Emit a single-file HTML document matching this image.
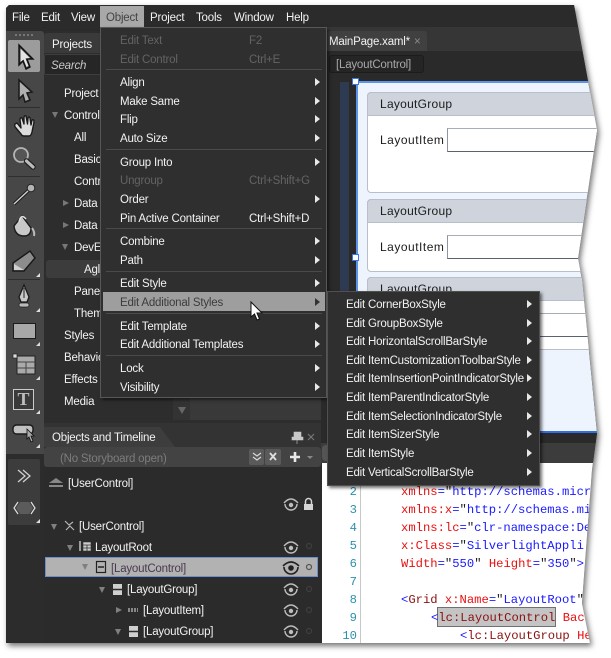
<!DOCTYPE html>
<html><head><meta charset="utf-8">
<style>
html,body{margin:0;padding:0;background:#fff;width:611px;height:658px;overflow:hidden}
#sh{position:absolute;left:0;top:0;width:611px;height:658px;filter:drop-shadow(2px 3px 3px rgba(0,0,0,.55))}
#w{position:absolute;left:0;top:0;width:611px;height:658px;background:#2f2f2f;clip-path:polygon(9px 5px,574px 5px,597px 130px,578px 258px,582px 280px,597px 433px,592px 470px,582px 603px,590px 643px,6px 643px,6px 8px);overflow:hidden}
.a{position:absolute}
.t{position:absolute;white-space:nowrap;line-height:14px;height:14px;margin-top:1px;color:#f2f2f2;font:11.5px/14px "Liberation Sans",sans-serif;letter-spacing:-.2px}
.d{color:#636363}
.h{color:#1c1c1c;font-size:12px;letter-spacing:.27px;margin-top:0}
.i{color:#1c1c1c;font-size:12px;letter-spacing:.5px;margin-top:0}
.r{position:absolute;width:0;height:0;border-left:5px solid #e8e8e8;border-top:4px solid transparent;border-bottom:4px solid transparent}
.s{position:absolute;left:106px;width:216px;height:1px;background:#4a4a4a}
.ct{position:absolute;white-space:pre;font:12.2px/16px "Liberation Mono",monospace;height:16px}
.n{position:absolute;right:254px;font:12.2px/16px "Liberation Mono",monospace;color:#2b91af}
.x{color:#e81010}.b{color:#1a1aff}.m{color:#8b1010}.k{color:#222}
svg{position:absolute;overflow:visible}
</style></head><body>
<div id="sh"><div id="w">

<!-- menu bar -->
<div class="a" style="left:6px;top:5px;width:600px;height:26px;background:#2b2b2b"></div>
<div class="a" style="left:100px;top:6px;width:44px;height:21px;background:#a8a8a8"></div>
<div class="t" style="left:12px;top:10px">File</div>
<div class="t" style="left:41px;top:10px">Edit</div>
<div class="t" style="left:71px;top:10px">View</div>
<div class="t" style="left:106px;top:10px;color:#444">Object</div>
<div class="t" style="left:150px;top:10px">Project</div>
<div class="t" style="left:196px;top:10px">Tools</div>
<div class="t" style="left:234px;top:10px">Window</div>
<div class="t" style="left:286px;top:10px">Help</div>

<!-- left toolbar -->
<div class="a" style="left:6px;top:31px;width:38px;height:612px;background:#2c2c2c"></div>
<div class="a" style="left:6px;top:31px;width:38px;height:423px;background:#474747;border-radius:0 3px 0 0"></div>
<div class="a" style="left:8px;top:459px;width:32px;height:66px;background:#3c3c3c;border-radius:2px"></div>
<div class="a" style="left:15px;top:34px;width:18px;height:2px;background:repeating-linear-gradient(90deg,#777 0 2px,transparent 2px 4px)"></div>
<div class="a" style="left:8px;top:40px;width:32px;height:32px;background:#9c9c9c;border-radius:2px"></div>
<div class="a" style="left:8px;top:107px;width:32px;height:1px;background:#2e2e2e"></div>
<div class="a" style="left:8px;top:176px;width:32px;height:1px;background:#2e2e2e"></div>
<div class="a" style="left:8px;top:279px;width:32px;height:1px;background:#2e2e2e"></div>

<svg width="611" height="658" style="left:0;top:0">
<!-- selection arrow active -->
<path d="M19 45 L33 59 L27 59 L30 67 L26 69 L23 61 L19 65 Z" fill="#3a3a3a" stroke="#111" stroke-width="1.4"/>
<path d="M20.5 48.5 L30 58 L25.5 58.5 L28.5 66 L26.5 67 L23.5 59.5 L20.5 62 Z" fill="#e4e4e4"/>
<!-- direct select arrow -->
<path d="M19 80 L32 92 L27 93 L30 100 L25 102 L23 95 L19 99 Z" fill="#b0b0b0" stroke="#1c1c1c" stroke-width="1.6"/>
<!-- hand -->
<path d="M15 124 Q14 126 16 128 L21 134 Q22 136 24 136 H29 Q31 136 32 132 L34 122 Q34 119 32 120 L31 125 L30 118 Q29 116 28 118 L27.500 124 L26 116 Q25 115 24 117 L24 124 L22 118 Q20 117 20 120 L21 128 L17 123 Z" fill="#dcdcdc" stroke="#1a1a1a" stroke-width="1.400" stroke-linejoin="round"/>
<!-- zoom -->
<circle cx="21" cy="155" r="7" fill="#555" stroke="#b4b4b4" stroke-width="1.800"/>
<path d="M26.500 161 L33 167" stroke="#1c1c1c" stroke-width="5.400" stroke-linecap="round"/>
<path d="M26.500 161 L33 167" stroke="#bcbcbc" stroke-width="3.200" stroke-linecap="round"/>
<!-- eyedropper -->
<path d="M14 204 L29 190" stroke="#1c1c1c" stroke-width="3.400"/>
<path d="M14 204 L29 190" stroke="#d0d0d0" stroke-width="1.400"/>
<circle cx="31" cy="188" r="3.800" fill="#b4b4b4" stroke="#222"/>
<!-- bucket -->
<path d="M14 226 Q15 236 24 236 Q31 236 31 228 L22 216 Z" fill="#c8c8c8" stroke="#1c1c1c" stroke-width="1.400"/>
<path d="M19 222 Q21 213 26 219" fill="none" stroke="#ddd" stroke-width="1.500"/>
<path d="M32 228 Q35 232 34 236" fill="none" stroke="#bbb" stroke-width="2"/>
<!-- eraser -->
<path d="M13 263 L30 251 L35 258 L24 271 L13 271 Z" fill="#8c8c8c" stroke="#1a1a1a" stroke-width="1.500"/>
<path d="M14 264 L24 270 L14 270 Z" fill="#d0d0d0"/>
<path d="M36 277 L40 277 L40 273 Z" fill="#ddd"/>
<!-- pen -->
<path d="M24 285 L29 297 L27 302 L21 302 L19 297 Z" fill="#c9c9c9" stroke="#1a1a1a" stroke-width="1.300"/>
<path d="M24 288 L24 298" stroke="#222"/>
<rect x="19" y="303" width="10" height="4" rx="2" fill="#bbb" stroke="#222" stroke-width=".8"/>
<path d="M36 312 L40 312 L40 308 Z" fill="#ddd"/>
<!-- rect -->
<rect x="13.500" y="323.500" width="22" height="15" fill="#a8a8a8" stroke="#1c1c1c"/>
<path d="M36 346 L40 346 L40 342 Z" fill="#ddd"/>
<!-- grid -->
<rect x="17" y="356" width="18" height="18" fill="#aaa" stroke="#222"/>
<path d="M17 362 H35 M26 362 V374 M17 368 H35" stroke="#444" stroke-width="1"/>
<rect x="13" y="354" width="4" height="4" fill="#ddd" stroke="#222" stroke-width=".7"/>
<path d="M36 380 L40 380 L40 376 Z" fill="#ddd"/>
<!-- text -->
<rect x="13.500" y="389.500" width="20" height="20" fill="#3a3a3a" stroke="#ccc"/>
<text x="23.500" y="405" text-anchor="middle" font-family="Liberation Serif,serif" font-weight="bold" font-size="18" fill="#bdbdbd">T</text>
<path d="M36 414 L40 414 L40 410 Z" fill="#ddd"/>
<!-- callout -->
<rect x="13" y="425" width="20" height="9" rx="3.500" fill="#c0c0c0" stroke="#1a1a1a" stroke-width="1.400"/>
<path d="M27 429 L34 436 L31 436 L33 441 L31 442 L29 437 L27 439 Z" fill="#aaa" stroke="#111" stroke-width=".8"/>
<path d="M36 448 L40 448 L40 444 Z" fill="#ddd"/>
<!-- chevrons -->
<path d="M18 470 L25 476 L18 482 M23 470 L30 476 L23 482" fill="none" stroke="#cfcfcf" stroke-width="1.300"/>
<!-- hex -->
<path d="M20 502 H29 L33 508 L29 514 H20 L16 508 Z" fill="#5b5b5b"/>
<path d="M18 502 L14 508 L18 514 M31 502 L35 508 L31 514" fill="none" stroke="#e0e0e0" stroke-width="1.200"/>
<path d="M36 523 L40 523 L40 519 Z" fill="#ddd"/>
</svg>

<!-- projects panel -->
<div class="a" style="left:44px;top:31px;width:277px;height:392px;background:#2d2d2d"></div>
<div class="a" style="left:44px;top:33px;width:60px;height:20px;background:#3a3a3a;border-radius:3px 0 0 0"></div>
<div class="t" style="left:52px;top:37px">Projects</div>
<div class="a" style="left:44px;top:54px;width:60px;height:21px;background:#262626;border:1px solid #3e3e3e;box-sizing:border-box;border-radius:2px"></div>
<div class="t" style="left:51px;top:58px;font-style:italic;color:#c8c8c8">Search</div>
<div class="a" style="left:46px;top:260px;width:60px;height:18px;background:#3c3c3c;border-radius:3px"></div>
<div class="t" style="left:64px;top:86px">Project</div>
<div class="t" style="left:64px;top:108px">Control</div>
<div class="t" style="left:74px;top:130px">All</div>
<div class="t" style="left:74px;top:152px">Basic</div>
<div class="t" style="left:74px;top:174px">Contr</div>
<div class="t" style="left:74px;top:196px">Data</div>
<div class="t" style="left:74px;top:218px">Data</div>
<div class="t" style="left:74px;top:240px">DevEx</div>
<div class="t" style="left:84px;top:262px">Agl</div>
<div class="t" style="left:74px;top:284px">Panel</div>
<div class="t" style="left:74px;top:306px">Them</div>
<div class="t" style="left:64px;top:328px">Styles</div>
<div class="t" style="left:64px;top:350px">Behavio</div>
<div class="t" style="left:64px;top:372px">Effects</div>
<div class="t" style="left:64px;top:394px">Media</div>
<svg width="611" height="658" style="left:0;top:0">
<path d="M52 112 H58 L55 118 Z M62 244 H68 L65 250 Z" fill="#777"/>
<path d="M63 200 V206 L69 203 Z M63 222 V228 L69 225 Z" fill="#777"/>
</svg>
<div class="a" style="left:173px;top:397px;width:17px;height:23px;background:#333"></div>
<div class="a" style="left:190px;top:397px;width:131px;height:23px;background:#393939"></div>
<div class="a" style="left:178px;top:407px;border-top:7px solid #666;border-left:4px solid transparent;border-right:4px solid transparent"></div>

<!-- objects and timeline -->
<div class="a" style="left:44px;top:423px;width:277px;height:220px;background:#2b2b2b"></div>
<div class="a" style="left:44px;top:423px;width:277px;height:24px;background:#333"></div>
<div class="a" style="left:44px;top:427px;width:131px;height:20px;background:#3d3d3d;clip-path:polygon(0 0,116px 0,131px 20px,0 20px)"></div>
<div class="t" style="left:52px;top:430px">Objects and Timeline</div>
<div class="a" style="left:44px;top:447px;width:277px;height:20px;background:#434343;border-radius:3px"></div>
<div class="t" style="left:60px;top:451px;color:#7c7c7c">(No Storyboard open)</div>
<div class="a" style="left:249px;top:449px;width:15px;height:16px;background:#5a5a5a;border-radius:2px"></div>
<div class="a" style="left:265px;top:449px;width:16px;height:16px;background:#5a5a5a;border-radius:2px"></div>
<div class="a" style="left:45px;top:557px;width:273px;height:20px;box-sizing:border-box;background:#b2b2b2;border:1px solid #6c8fcf"></div>
<svg width="611" height="658" style="left:0;top:0">
<!-- pin & x -->
<path d="M294 432 H301 V437 H303 V440 H292 V437 H294 Z M297 440 V444" fill="#c8c8c8" stroke="#c8c8c8" stroke-width=".6"/>
<path d="M308 434 L314 440 M314 434 L308 440" stroke="#777" stroke-width="1.200"/>
<path d="M253 453 L257 456 L261 453 M253 457 L257 460 L261 457" fill="none" stroke="#d8d8d8" stroke-width="1.200"/>
<path d="M270 453 L276 460 M276 453 L270 460" stroke="#e0e0e0" stroke-width="1.800"/>
<path d="M295 452 V462 M290 457 H300" stroke="#e8e8e8" stroke-width="2.600"/>
<path d="M307 456 H313 L310 459 Z" fill="#8a8a8a"/>
<!-- up arrow -->
<path d="M49 483 L56 478 L63 483 Z" fill="#888"/><path d="M49 485 H63 V487 H49 Z" fill="#888"/>
<!-- tree arrows -->
<path d="M51 524 H57 L54 530 Z M67 545 H73 L70 551 Z M82 564 H88 L85 570 Z M99 587 H105 L102 593 Z M115 629 H121 L118 635 Z" fill="#808080"/>
<path d="M116 607 V613 L122 610 Z" fill="#808080"/>
<!-- tree icons -->
<path d="M65 521 L69 525 L73 522 M66 530 L70 526 L74 530" stroke="#bbb" fill="none" stroke-width="1.100"/>
<rect x="83" y="542" width="8" height="9" fill="#ccc" stroke="#333" stroke-width=".6"/><path d="M83 545 H91 M87 545 V551 M83 548 H91" stroke="#333" stroke-width=".8"/>
<path d="M80 541 V551" stroke="#ccc" stroke-width="1.400"/>
<rect x="96.500" y="561.500" width="9" height="11" fill="none" stroke="#222" stroke-width="1.200"/><path d="M98 567 H104" stroke="#222" stroke-width="1.500"/>
<rect x="113" y="584" width="9" height="11" fill="#cfcfcf"/><path d="M113 589.500 H122" stroke="#2b2b2b" stroke-width="1.500"/>
<rect x="129" y="626" width="9" height="11" fill="#cfcfcf"/><path d="M129 631.500 H138" stroke="#2b2b2b" stroke-width="1.500"/>
<path d="M128 610 H138" stroke="#888" stroke-width="4" stroke-dasharray="2 1"/>
</svg>
<div class="t" style="left:68px;top:476px">[UserControl]</div>
<div class="t" style="left:79px;top:519px">[UserControl]</div>
<div class="t" style="left:95px;top:540px">LayoutRoot</div>
<div class="t" style="left:111px;top:561px;color:#4a3a50">[LayoutControl]</div>
<div class="t" style="left:127px;top:582px">[LayoutGroup]</div>
<div class="t" style="left:143px;top:603px">[LayoutItem]</div>
<div class="t" style="left:143px;top:624px">[LayoutGroup]</div>
<svg width="611" height="658" style="left:0;top:0">
<g fill="none" stroke="#bdbdbd" stroke-width="1.400">
<path d="M284 503 Q291 495 298 503 M285 504 a6 6 0 0 0 12 0"/>
<circle cx="291" cy="505" r="2.200" fill="#bdbdbd" stroke="none"/>
<path d="M284 546 Q291 538 298 546 M285 547 a6 6 0 0 0 12 0"/><circle cx="291" cy="548" r="2.200" fill="#bdbdbd" stroke="none"/>
<path d="M284 588 Q291 580 298 588 M285 589 a6 6 0 0 0 12 0"/><circle cx="291" cy="590" r="2.200" fill="#bdbdbd" stroke="none"/>
<path d="M284 609 Q291 601 298 609 M285 610 a6 6 0 0 0 12 0"/><circle cx="291" cy="611" r="2.200" fill="#bdbdbd" stroke="none"/>
<path d="M284 630 Q291 622 298 630 M285 631 a6 6 0 0 0 12 0"/><circle cx="291" cy="632" r="2.200" fill="#bdbdbd" stroke="none"/>
</g>
<g fill="none" stroke="#222" stroke-width="1.600">
<path d="M283 566 Q291 558 299 566 M284 567 a7 7 0 0 0 14 0"/><circle cx="291" cy="568" r="2.800" fill="#222" stroke="none"/>
</g>
<rect x="304" y="504" width="9" height="6" fill="#d4d4d4"/><path d="M305.500 504 V501.500 a3 3 0 0 1 6 0 V504" fill="none" stroke="#d4d4d4" stroke-width="1.500"/>
<g fill="none" stroke="#3e3e3e" stroke-width="1.200"><circle cx="309" cy="546" r="2.500"/><circle cx="309" cy="589" r="2.500"/><circle cx="309" cy="610" r="2.500"/><circle cx="309" cy="631" r="2.500"/></g>
<circle cx="309" cy="567" r="2.500" fill="none" stroke="#555" stroke-width="1.200"/>
</svg>

<!-- document -->
<div class="a" style="left:321px;top:27px;width:290px;height:24px;background:#363636"></div>
<div class="a" style="left:327px;top:31px;width:100px;height:20px;background:#404040;border-radius:3px 3px 0 0"></div>
<div class="t" style="left:329px;top:34px">MainPage.xaml*</div>
<div class="t" style="left:414px;top:34px;color:#8a8a8a">×</div>
<div class="a" style="left:321px;top:51px;width:290px;height:25px;background:#2a2a2a"></div>
<div class="a" style="left:329px;top:55px;width:95px;height:18px;box-sizing:border-box;background:#252525;border:1px solid #1c1c1c;border-radius:3px"></div>
<div class="t" style="left:336px;top:57px;color:#a8a8a8">[LayoutControl]</div>
<div class="a" style="left:321px;top:76px;width:290px;height:357px;background:#2a2a2a"></div>
<div class="a" style="left:340px;top:82px;width:9px;height:351px;background:#2e3a52"></div>
<div class="a" style="left:356px;top:81px;width:255px;height:352px;box-sizing:border-box;background:#edf4fd;border-left:2px solid #5b93e8;border-top:2px solid #5b93e8;border-bottom:2px solid #2f6fe0"></div>
<div class="a" style="left:352px;top:78px;width:5px;height:5px;background:#fff;border:1px solid #3a78e0"></div>
<div class="a" style="left:352px;top:254px;width:5px;height:5px;background:#fff;border:1px solid #3a78e0"></div>
<!-- groups -->
<div class="a" style="left:367px;top:92px;width:260px;height:101px;box-sizing:border-box;background:#fff;border:1px solid #b9bfc8;border-radius:4px"></div>
<div class="a" style="left:367px;top:92px;width:260px;height:24px;box-sizing:border-box;background:#ced3dc;border:1px solid #b9bfc8;border-radius:4px 4px 0 0"></div>
<div class="t h" style="left:380px;top:97px">LayoutGroup</div>
<div class="t i" style="left:380px;top:133px">LayoutItem</div>
<div class="a" style="left:447px;top:128px;width:200px;height:24px;box-sizing:border-box;background:#fff;border:1px solid #8d95a0;border-top-color:#a8aeb7;border-bottom-color:#5a6470"></div>
<div class="a" style="left:367px;top:199px;width:260px;height:73px;box-sizing:border-box;background:#fff;border:1px solid #b9bfc8;border-radius:4px"></div>
<div class="a" style="left:367px;top:199px;width:260px;height:24px;box-sizing:border-box;background:#ced3dc;border:1px solid #b9bfc8;border-radius:4px 4px 0 0"></div>
<div class="t h" style="left:380px;top:204px">LayoutGroup</div>
<div class="t i" style="left:380px;top:240px">LayoutItem</div>
<div class="a" style="left:447px;top:235px;width:200px;height:24px;box-sizing:border-box;background:#fff;border:1px solid #8d95a0;border-top-color:#a8aeb7;border-bottom-color:#5a6470"></div>
<div class="a" style="left:367px;top:277px;width:260px;height:73px;box-sizing:border-box;background:#fff;border:1px solid #b9bfc8;border-radius:4px"></div>
<div class="a" style="left:367px;top:277px;width:260px;height:24px;box-sizing:border-box;background:#ced3dc;border:1px solid #b9bfc8;border-radius:4px 4px 0 0"></div>
<div class="t h" style="left:380px;top:282px">LayoutGroup</div>
<div class="a" style="left:447px;top:313px;width:200px;height:24px;box-sizing:border-box;background:#fff;border-top:1px solid #a8aeb7;border-bottom:1px solid #5a6470"></div>
<!-- below design -->
<div class="a" style="left:321px;top:433px;width:290px;height:10px;background:#2a2a2a"></div>
<div class="a" style="left:321px;top:443px;width:290px;height:20px;background:#3c3c3c"></div>
<div class="a" style="left:322px;top:445px;width:8px;height:16px;background:#555;border-radius:4px"></div>
<!-- code -->
<div class="a" style="left:321px;top:463px;width:290px;height:180px;background:#fff;border-left:1px solid #2a2a2a;box-sizing:border-box"></div>
<div class="a" style="left:360px;top:463px;width:1px;height:180px;background:#c8c8c8"></div>
<div class="n" style="top:484px">2</div>
<div class="n" style="top:502px">3</div>
<div class="n" style="top:520px">4</div>
<div class="n" style="top:538px">5</div>
<div class="n" style="top:556px">6</div>
<div class="n" style="top:574px">7</div>
<div class="n" style="top:592px">8</div>
<div class="n" style="top:610px">9</div>
<div class="n" style="top:628px">10</div>
<div class="ct" style="left:401px;top:484px"><span class="x">xmlns</span><span class="b">=</span><span class="k">"</span><span class="b">http://schemas.micr</span></div>
<div class="ct" style="left:401px;top:502px"><span class="x">xmlns:x</span><span class="b">=</span><span class="k">"</span><span class="b">http://schemas.mi</span></div>
<div class="ct" style="left:401px;top:520px"><span class="x">xmlns:lc</span><span class="b">=</span><span class="k">"</span><span class="b">clr-namespace:De</span></div>
<div class="ct" style="left:401px;top:538px"><span class="x">x:Class</span><span class="b">=</span><span class="k">"</span><span class="b">SilverlightAppli</span></div>
<div class="ct" style="left:401px;top:556px"><span class="x">Width</span><span class="b">=</span><span class="k">"</span><span class="b">550</span><span class="k">"</span> <span class="x">Height</span><span class="b">=</span><span class="k">"</span><span class="b">350</span><span class="k">"</span><span class="b">&gt;</span></div>
<div class="ct" style="left:401px;top:592px"><span class="b">&lt;</span><span class="m">Grid</span> <span class="x">x:Name</span><span class="b">=</span><span class="k">"</span><span class="b">LayoutRoot</span><span class="k">"</span></div>
<div class="a" style="left:437px;top:607px;width:119px;height:20px;box-sizing:border-box;background:#c4c4c4;border:1px solid #707070"></div>
<div class="ct" style="left:431px;top:610px"><span class="b">&lt;</span><span class="m">lc:LayoutControl</span> <span class="x">Bac</span></div>
<div class="ct" style="left:460px;top:628px"><span class="b">&lt;</span><span class="m">lc:LayoutGroup</span> <span class="x">He</span></div>

<!-- object menu -->
<div class="a" style="left:100px;top:27px;width:227px;height:371px;box-sizing:border-box;background:#2f2f2f;border:1px solid #585858;box-shadow:2px 2px 3px rgba(0,0,0,.5)"></div>
<div class="a" style="left:103px;top:292px;width:222px;height:19px;background:#9e9e9e"></div>
<div class="s" style="top:69px"></div><div class="s" style="top:149px"></div><div class="s" style="top:228px"></div><div class="s" style="top:271px"></div><div class="s" style="top:313px"></div><div class="s" style="top:355px"></div>
<div class="t d" style="left:120px;top:33px">Edit Text</div><div class="t d" style="left:249px;top:33px">F2</div>
<div class="t d" style="left:120px;top:52px">Edit Control</div><div class="t d" style="left:249px;top:52px">Ctrl+E</div>
<div class="t" style="left:120px;top:75px">Align</div><div class="r" style="left:315px;top:78px"></div>
<div class="t" style="left:120px;top:94px">Make Same</div><div class="r" style="left:315px;top:97px"></div>
<div class="t" style="left:120px;top:112px">Flip</div><div class="r" style="left:315px;top:115px"></div>
<div class="t" style="left:120px;top:131px">Auto Size</div><div class="r" style="left:315px;top:134px"></div>
<div class="t" style="left:120px;top:155px">Group Into</div><div class="r" style="left:315px;top:158px"></div>
<div class="t d" style="left:120px;top:173px">Ungroup</div><div class="t d" style="left:249px;top:173px">Ctrl+Shift+G</div>
<div class="t" style="left:120px;top:192px">Order</div><div class="r" style="left:315px;top:195px"></div>
<div class="t" style="left:120px;top:211px">Pin Active Container</div><div class="t" style="left:249px;top:211px">Ctrl+Shift+D</div>
<div class="t" style="left:120px;top:234px">Combine</div><div class="r" style="left:315px;top:237px"></div>
<div class="t" style="left:120px;top:253px">Path</div><div class="r" style="left:315px;top:256px"></div>
<div class="t" style="left:120px;top:276px">Edit Style</div><div class="r" style="left:315px;top:279px"></div>
<div class="t" style="left:120px;top:295px;color:#3c3c3c">Edit Additional Styles</div><div class="r" style="left:315px;top:298px;border-left-color:#333"></div>
<div class="t" style="left:120px;top:319px">Edit Template</div><div class="r" style="left:315px;top:322px"></div>
<div class="t" style="left:120px;top:337px">Edit Additional Templates</div><div class="r" style="left:315px;top:340px"></div>
<div class="t" style="left:120px;top:361px">Lock</div><div class="r" style="left:315px;top:364px"></div>
<div class="t" style="left:120px;top:380px">Visibility</div><div class="r" style="left:315px;top:383px"></div>

<!-- submenu -->
<div class="a" style="left:327px;top:291px;width:213px;height:195px;box-sizing:border-box;background:#2f2f2f;border:1px solid #505050;box-shadow:2px 2px 3px rgba(0,0,0,.55)"></div>
<div class="t" style="left:346px;top:297px">Edit CornerBoxStyle</div><div class="r" style="left:527px;top:300px"></div>
<div class="t" style="left:346px;top:316px">Edit GroupBoxStyle</div><div class="r" style="left:527px;top:319px"></div>
<div class="t" style="left:346px;top:334px">Edit HorizontalScrollBarStyle</div><div class="r" style="left:527px;top:337px"></div>
<div class="t" style="left:346px;top:353px">Edit ItemCustomizationToolbarStyle</div><div class="r" style="left:527px;top:356px"></div>
<div class="t" style="left:346px;top:371px">Edit ItemInsertionPointIndicatorStyle</div><div class="r" style="left:527px;top:374px"></div>
<div class="t" style="left:346px;top:390px">Edit ItemParentIndicatorStyle</div><div class="r" style="left:527px;top:393px"></div>
<div class="t" style="left:346px;top:409px">Edit ItemSelectionIndicatorStyle</div><div class="r" style="left:527px;top:412px"></div>
<div class="t" style="left:346px;top:427px">Edit ItemSizerStyle</div><div class="r" style="left:527px;top:430px"></div>
<div class="t" style="left:346px;top:446px">Edit ItemStyle</div><div class="r" style="left:527px;top:449px"></div>
<div class="t" style="left:346px;top:465px">Edit VerticalScrollBarStyle</div><div class="r" style="left:527px;top:468px"></div>

<!-- mouse cursor -->
<svg width="611" height="658" style="left:0;top:0">
<path d="M251 302 V317 L254.500 314 L257 320 L259.500 319 L257 313 L262 313 Z" fill="#fff" stroke="#111" stroke-width="1"/>
</svg>
</div></div>
</body></html>
